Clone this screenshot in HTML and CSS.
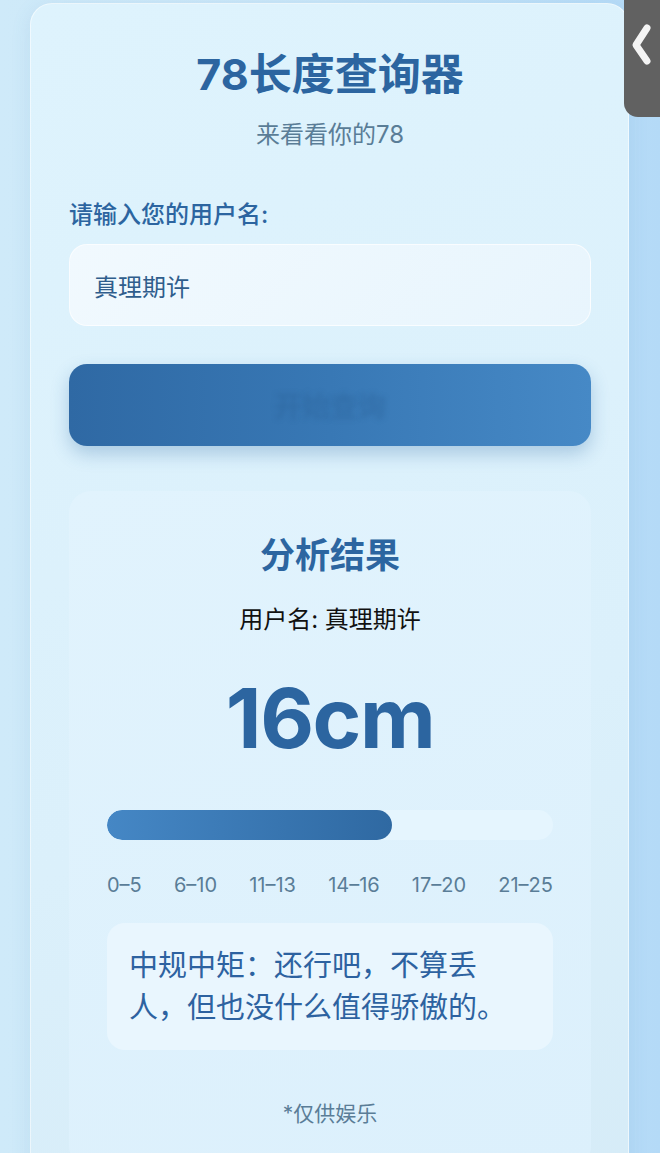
FILE: index.html
```html
<!DOCTYPE html>
<html>
    <head>
        <meta name="viewport" content="width=device-width, initial-scale=1.0">
        <title>78长度查询器</title>
        <link rel="stylesheet" href="styles.css">
    </head>
    <body>
        <div class="sideTab">
            <svg width="36" height="117" viewBox="0 0 36 117">
                <path d="M23 28 L12 45 L23 61" fill="none" stroke="#f4f4f4" stroke-width="7" stroke-linecap="round" stroke-linejoin="round"/>
            </svg>
        </div>
        <div class="card">
            <h1>78长度查询器</h1>
            <p class="subtitle">来看看你的78</p>
            <label class="label" for="username">请输入您的用户名:</label>
            <input id="username" class="nameInput" type="text" value="真理期许">
            <button class="goButton">开始查询</button>

            <div class="result">
                <h2>分析结果</h2>
                <p class="userLine">用户名: 真理期许</p>
                <div class="length">16cm</div>
                <div class="bar">
                    <div class="barFill" style="width: 64%;"></div>
                </div>
                <div class="ranges">
                    <span>0–5</span>
                    <span>6–10</span>
                    <span>11–13</span>
                    <span>14–16</span>
                    <span>17–20</span>
                    <span>21–25</span>
                </div>
                <div class="comment">中规中矩：还行吧，不算丢人，但也没什么值得骄傲的。</div>
                <p class="note">*仅供娱乐</p>
            </div>
        </div>
    </body>
</html>
```

FILE: styles.css
```css
html, body{
    height: 100%;
}
body{
    margin: 0px;
    font-family: "Inter", "Noto Sans CJK SC", sans-serif;
    background: linear-gradient(90deg, #cfeaf9 0%, #c9e6f8 50%, #b4daf7 100%);
    overflow: hidden;
}
.sideTab{
    position: fixed;
    top: 0px;
    right: 0px;
    width: 36px;
    height: 117px;
    background-color: #616161;
    border-bottom-left-radius: 14px;
}
.sideTab svg{
    display: block;
}
.card{
    margin: 3px 31px 0px 30px;
    padding: 38px 37px 38px 38px;
    min-height: 1300px;
    border: 1px solid rgba(255, 255, 255, 0.55);
    border-radius: 22px;
    background: linear-gradient(160deg, #def3fd 0%, #dbf0fb 55%, #d4eaf6 100%);
    box-shadow: 0 4px 20px rgba(70, 130, 180, 0.12);
}
h1{
    margin: 6px 0px 0px;
    text-align: center;
    font-size: 43px;
    line-height: 52px;
    font-weight: 700;
    color: #2c65a0;
}
.subtitle{
    margin: 18px 0px 0px;
    text-align: center;
    font-size: 24px;
    line-height: 34px;
    color: #5a7d97;
}
.label{
    display: block;
    margin-top: 46px;
    font-size: 24px;
    line-height: 34px;
    font-weight: 500;
    color: #2c65a0;
}
.nameInput{
    display: block;
    box-sizing: border-box;
    width: 100%;
    height: 82px;
    margin-top: 12px;
    padding: 0px 24px;
    border: 1px solid rgba(255, 255, 255, 0.7);
    border-radius: 18px;
    background: linear-gradient(135deg, #f1f9fe, #e8f5fd);
    font-family: inherit;
    font-size: 24px;
    color: #2f5d8c;
    outline: none;
}
.goButton{
    display: block;
    width: 100%;
    height: 82px;
    margin-top: 38px;
    border: none;
    border-radius: 18px;
    background: linear-gradient(90deg, #2f69a4 0%, #3878b5 50%, #4689c6 100%);
    box-shadow: 0 8px 18px rgba(40, 100, 160, 0.28);
    font-family: inherit;
    font-size: 28px;
    font-weight: 700;
    color: transparent;
    text-shadow: 0 0 5px rgba(40, 95, 150, 0.35);
}
.result{
    margin-top: 45px;
    padding: 42px 38px 40px;
    border-radius: 22px;
    background: linear-gradient(160deg, #e1f3fd, #dcf0fc);
}
h2{
    margin: 0px;
    text-align: center;
    font-size: 35px;
    line-height: 45px;
    font-weight: 700;
    color: #2c65a0;
}
.userLine{
    margin: 25px 0px 0px;
    text-align: center;
    font-size: 24px;
    line-height: 34px;
    color: #111;
}
.length{
    margin-top: 39px;
    text-align: center;
    font-size: 83px;
    line-height: 84px;
    font-weight: 700;
    letter-spacing: -1.5px;
    color: #2c65a0;
}
.bar{
    margin-top: 50px;
    height: 30px;
    border-radius: 15px;
    background-color: #e5f5fe;
    overflow: hidden;
}
.barFill{
    height: 100%;
    border-radius: 15px;
    background: linear-gradient(90deg, #4587c5, #2f69a2);
}
.ranges{
    display: flex;
    justify-content: space-between;
    margin-top: 33px;
    font-size: 20px;
    line-height: 25px;
    color: #5a7d97;
}
.comment{
    margin-top: 25px;
    padding: 22px 26px 21px 22px;
    border-radius: 18px;
    background-color: #e9f6fe;
    font-size: 29px;
    line-height: 42px;
    color: #2d62a0;
}
.note{
    margin: 50px 0px 0px;
    text-align: center;
    font-size: 21px;
    line-height: 28px;
    color: #5a7d97;
}
```
